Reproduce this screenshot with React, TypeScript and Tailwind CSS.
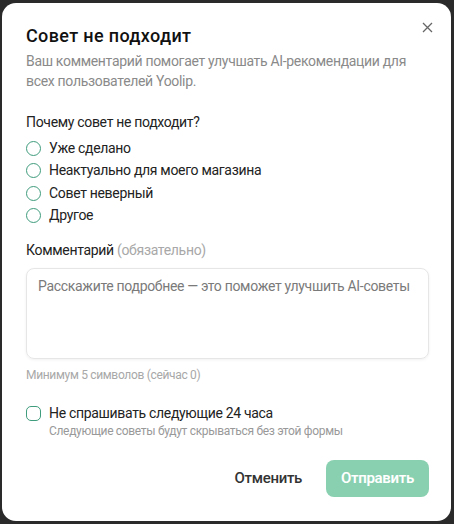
import React from "react";

function Radio({ label }: { label: string }) {
  return (
    <label className="flex items-center gap-[8px] h-[22.5px]">
      <span className="w-[15px] h-[15px] rounded-full border-[1.5px] border-[#3f9c7d] shrink-0" />
      <span className="text-[14px] text-[#222]">{label}</span>
    </label>
  );
}

export default function App() {
  return (
    <div className="w-[454px] h-[524px] bg-[#2a2a2a] pt-[3px] pb-[3px] pl-[2px] pr-[3px] tracking-[-0.02em]" style={{ fontFamily: "Roboto, 'Noto Sans', sans-serif" }}>
      <div className="relative h-full bg-white rounded-[14px] pt-[22px] pl-[24px] pr-[22px] pb-[24px] flex flex-col">
        <button className="absolute right-[16px] top-[16px] w-[16px] h-[16px] flex items-center justify-center text-[#666]">
          <svg width="11" height="11" viewBox="0 0 11 11" fill="none" stroke="currentColor" strokeWidth="1.3">
            <path d="M1 1L10 10M10 1L1 10" />
          </svg>
        </button>
        <h2 className="text-[18px] leading-[22px] font-medium tracking-[0.02em] text-[#111]">Совет не подходит</h2>
        <p className="mt-[4px] text-[14px] leading-[20px] text-[#8a8a8a] pr-[10px]">
          Ваш комментарий помогает улучшать AI-рекомендации для всех пользователей Yoolip.
        </p>
        <div className="mt-[21px] text-[14px] leading-[20px] text-[#222]">Почему совет не подходит?</div>
        <div className="mt-[5px] flex flex-col">
          <Radio label="Уже сделано" />
          <Radio label="Неактуально для моего магазина" />
          <Radio label="Совет неверный" />
          <Radio label="Другое" />
        </div>
        <div className="mt-[13px] text-[14px] leading-[20px] text-[#222]">
          Комментарий <span className="text-[#a8a8a8]">(обязательно)</span>
        </div>
        <div className="mt-[8px] h-[91px] rounded-[8px] border border-[#e6e6e6] shadow-[0_1px_3px_rgba(0,0,0,0.06)] px-[11px] pt-[7px] text-[14px] leading-[20px] text-[#7a7a7a] whitespace-nowrap overflow-hidden">
          Расскажите подробнее — это поможет улучшить AI-советы
        </div>
        <div className="mt-[8px] text-[12px] leading-[16px] text-[#a8a8a8]">Минимум 5 символов (сейчас 0)</div>
        <div className="mt-[20px] flex gap-[8px]">
          <span className="mt-[3px] w-[15px] h-[15px] rounded-[5px] border-[1.5px] border-[#3f9c7d] shrink-0" />
          <div>
            <div className="text-[14px] leading-[20px] text-[#222]">Не спрашивать следующие 24 часа</div>
            <div className="text-[12px] leading-[16px] text-[#999]">Следующие советы будут скрываться без этой формы</div>
          </div>
        </div>
        <div className="mt-auto flex items-center justify-end gap-[22px]">
          <button className="text-[15px] font-medium text-[#333] px-[2px]">Отменить</button>
          <button className="h-[37px] w-[103px] rounded-[8px] bg-[#88d0b0] text-white text-[15px] font-semibold">Отправить</button>
        </div>
      </div>
    </div>
  );
}
